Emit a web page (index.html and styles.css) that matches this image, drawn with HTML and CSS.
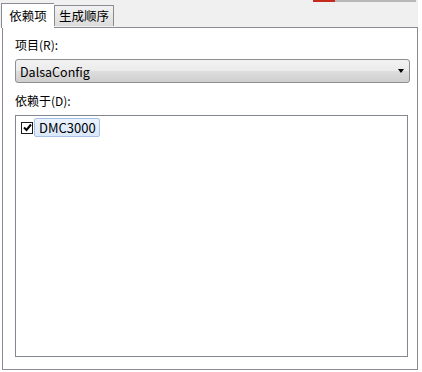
FILE: index.html
```html
<!DOCTYPE html>
<html lang="zh-CN">
<head>
  <meta charset="UTF-8" />
  <title>依赖项</title>
  <link rel="stylesheet" href="styles.css">
</head>
<body>
  <div class="window-edge"><span class="red"></span><span class="gray"></span></div>
  <div class="tabs">
    <div class="tab active">依赖项</div>
    <div class="tab">生成顺序</div>
  </div>
  <div class="panel">
    <label class="field-label">项目(R):</label>
    <div class="combo">
      <span class="combo-text">DalsaConfig</span>
      <span class="combo-arrow"></span>
    </div>
    <label class="field-label second">依赖于(D):</label>
    <div class="listbox">
      <div class="item">
        <span class="check">
          <svg width="9" height="9" viewBox="0 0 9 9"><path d="M1 4.5 L3.5 7 L8 1.5" fill="none" stroke="#000" stroke-width="2"/></svg>
        </span>
        <span class="item-text">DMC3000</span>
      </div>
    </div>
  </div>
</body>
</html>
```

FILE: styles.css
```css
body {
  margin: 0;
  width: 422px;
  height: 372px;
  background-color: #fff;
  font-family: "Noto Sans CJK SC", "Open Sans", sans-serif;
  font-size: 12px;
  color: #000;
  position: relative;
  overflow: hidden;
}

.window-edge {
  position: absolute;
  top: 0;
  left: 313px;
  display: flex;
  height: 2px;
}

.window-edge .red {
  width: 22px;
  background-color: #c42b1c;
}

.window-edge .gray {
  width: 81px;
  background-color: #b8b8b8;
}

.tabs {
  display: flex;
  align-items: flex-end;
  height: 27px;
  padding-left: 1px;
  background-color: #f0f0f0;
  width: 417px;
}

.tab {
  box-sizing: border-box;
  height: 21px;
  padding: 0 4px;
  line-height: 19px;
  border: 1px solid #898c95;
  border-bottom: none;
  background: linear-gradient(#f2f2f2, #dcdcdc);
  margin-bottom: 1px;
  font-size: 12.5px;
}

.tab.active {
  height: 25px;
  width: 53px;
  line-height: 23px;
  text-align: center;
  padding: 0;
  background: #fff;
  margin-bottom: -1px;
  position: relative;
  z-index: 1;
  border-right: none;
}

.panel {
  box-sizing: border-box;
  margin-left: 2px;
  width: 416px;
  height: 343px;
  border: 1px solid #898c95;
  background-color: #fff;
  padding: 9px 0 0 12px;
}

.field-label {
  display: block;
  height: 16px;
  line-height: 16px;
  margin-bottom: 6px;
}

.field-label.second {
  margin-top: 10px;
}

.combo {
  box-sizing: border-box;
  width: 395px;
  height: 24px;
  border: 1px solid #8e8f8f;
  border-radius: 3px;
  background: linear-gradient(#f2f2f2 0%, #ebebeb 50%, #dddddd 51%, #cfcfcf 100%);
  display: flex;
  align-items: center;
  justify-content: space-between;
  padding: 0 5px 0 4px;
}

.combo-text {
  font-size: 12.5px;
}

.combo-arrow {
  width: 0;
  height: 0;
  border-left: 3.5px solid transparent;
  border-right: 3.5px solid transparent;
  border-top: 4px solid #000;
}

.listbox {
  box-sizing: border-box;
  width: 393px;
  height: 242px;
  border: 1px solid #828790;
  padding: 2px 0 0 5px;
}

.item {
  display: flex;
  align-items: center;
  gap: 1px;
}

.check {
  box-sizing: border-box;
  width: 12px;
  height: 12px;
  border: 1px solid #1c1c1c;
  background: #fff;
  display: flex;
  align-items: center;
  justify-content: center;
}

.item-text {
  box-sizing: border-box;
  height: 19px;
  line-height: 17px;
  padding: 0 3px 0 4px;
  font-size: 13px;
  border: 1px solid #a5c2e6;
  border-radius: 2px;
  background: linear-gradient(#eaf2fd, #d9e8fb);
}
```
